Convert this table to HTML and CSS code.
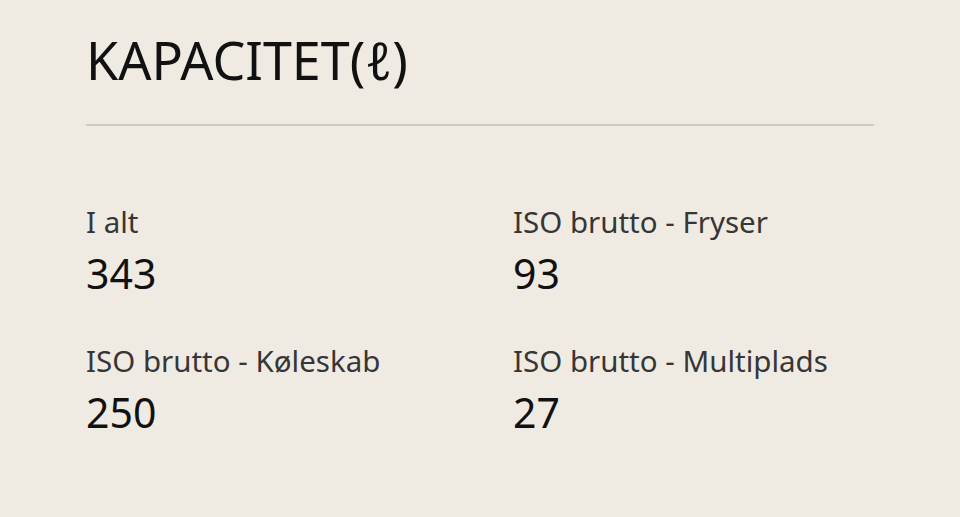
FILE: index.html
```html
<!DOCTYPE html>
<html lang="da">
<head>
<meta charset="utf-8">
<link rel="stylesheet" href="styles.css">
</head>
<body>
<section class="spec">
  <h2 class="spec-title">KAPACITET(ℓ)</h2>
  <div class="spec-grid">
    <div class="item"><div class="label">I alt</div><div class="value">343</div></div>
    <div class="item"><div class="label">ISO brutto - Fryser</div><div class="value">93</div></div>
    <div class="item"><div class="label">ISO brutto - Køleskab</div><div class="value">250</div></div>
    <div class="item"><div class="label">ISO brutto - Multiplads</div><div class="value">27</div></div>
  </div>
</section>
</body>
</html>
```
FILE: styles.css
```css
html, body {
  margin: 0;
  padding: 0;
  background: #f0ebe2;
}
body {
  font-family: "Noto Sans", "DejaVu Sans", sans-serif;
  color: #111;
  width: 960px;
  height: 517px;
  overflow: hidden;
}
.spec {
  padding: 26px 86px 0 86px;
}
.spec-title {
  margin: 0;
  font-weight: 400;
  font-size: 52px;
  line-height: 68px;
  padding-bottom: 30px;
  border-bottom: 2px solid #cfcbc3;
}
.spec-grid {
  display: grid;
  grid-template-columns: 427px 1fr;
  row-gap: 36px;
  padding-top: 76px;
}
.label {
  font-size: 29.5px;
  line-height: 40px;
  color: #363636;
}
.value {
  font-size: 41px;
  line-height: 63px;
  color: #111;
}
```
